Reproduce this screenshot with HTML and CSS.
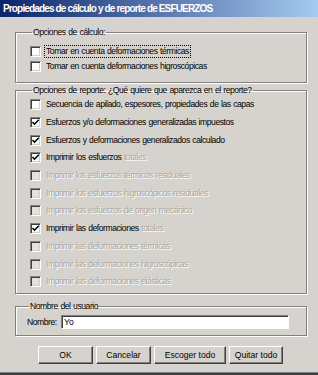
FILE: index.html
```html
<!DOCTYPE html>
<html lang="es">
  <head>
    <meta charset="UTF-8" />
    <title>Propiedades de cálculo y de reporte de ESFUERZOS</title>
    <link rel="stylesheet" href="styles.css">
  </head>
  <body>
    <div class="window">
      <div class="titlebar">Propiedades de cálculo y de reporte de ESFUERZOS</div>

      <fieldset class="group group-calc">
        <legend>Opciones de cálculo:</legend>
        <div class="row"><span class="cb"></span><span class="label focus">Tomar en cuenta deformaciones térmicas</span></div>
        <div class="row"><span class="cb"></span><span class="label">Tomar en cuenta deformaciones higroscópicas</span></div>
      </fieldset>

      <fieldset class="group group-report">
        <legend>Opciones de reporte: ¿Qué quiere que aparezca en el reporte?</legend>
        <div class="row"><span class="cb"></span><span class="label">Secuencia de apilado, espesores, propiedades de las capas</span></div>
        <div class="row"><span class="cb checked"><svg viewBox="0 0 9 9"><path d="M1.5 4 L3.5 6.2 L7.8 1.8"/></svg></span><span class="label">Esfuerzos y/o deformaciones generalizadas impuestos</span></div>
        <div class="row"><span class="cb checked"><svg viewBox="0 0 9 9"><path d="M1.5 4 L3.5 6.2 L7.8 1.8"/></svg></span><span class="label">Esfuerzos y deformaciones generalizados calculado</span></div>
        <div class="row"><span class="cb checked"><svg viewBox="0 0 9 9"><path d="M1.5 4 L3.5 6.2 L7.8 1.8"/></svg></span><span class="label">Imprimir los esfuerzos <span class="dim">totales</span></span></div>
        <div class="row disabled"><span class="cb"></span><span class="label">Imprimir los esfuerzos térmicos residuales</span></div>
        <div class="row disabled"><span class="cb"></span><span class="label">Imprimir los esfuerzos higroscópicos residuales</span></div>
        <div class="row disabled"><span class="cb"></span><span class="label">Imprimir los esfuerzos de origen mecánico</span></div>
        <div class="row"><span class="cb checked"><svg viewBox="0 0 9 9"><path d="M1.5 4 L3.5 6.2 L7.8 1.8"/></svg></span><span class="label">Imprimir las deformaciones <span class="dim">totales</span></span></div>
        <div class="row disabled"><span class="cb"></span><span class="label">Imprimir las deformaciones térmicas</span></div>
        <div class="row disabled"><span class="cb"></span><span class="label">Imprimir las deformaciones higroscópicas</span></div>
        <div class="row disabled"><span class="cb"></span><span class="label">Imprimir las deformaciones elásticas</span></div>
      </fieldset>

      <fieldset class="group group-user">
        <legend>Nombre del usuario</legend>
        <div class="name-row">
          <label for="nombre">Nombre:</label>
          <input id="nombre" type="text" value="Yo">
        </div>
      </fieldset>

      <div class="buttons">
        <button class="btn btn-ok">OK</button>
        <button class="btn btn-cancel">Cancelar</button>
        <button class="btn btn-all">Escoger todo</button>
        <button class="btn btn-none">Quitar todo</button>
      </div>
    </div>
  </body>
</html>
```

FILE: styles.css
```css
* {
  box-sizing: border-box;
  margin: 0;
  padding: 0;
}

body {
  font-family: "Liberation Sans", Arial, sans-serif;
  font-size: 8.6px;
  letter-spacing: -0.45px;
  word-spacing: 0.6px;
  color: #000;
  background-color: #d6d3ce;
}

.window {
  width: 318px;
  height: 375px;
  background-color: #d6d3ce;
  border-bottom: 2px solid #404040;
  box-shadow: inset 0 -1px 0 #808080;
}

.titlebar {
  height: 17px;
  line-height: 17px;
  padding-left: 3px;
  color: #fff;
  font-weight: bold;
  font-size: 10px;
  letter-spacing: -0.85px;
  word-spacing: 0;
  background: linear-gradient(to right, #0a246a, #a6caf0);
}

.group {
  margin: 0 11px 0 15px;
  border: 1px solid #808080;
  box-shadow: 1px 1px 0 #fff, inset 1px 1px 0 #fff;
  padding: 0 0 0 14px;
}

.group legend {
  margin-left: 2px;
  padding: 0 1px;
  line-height: 12px;
}

.group-calc {
  margin-top: 9px;
  height: 57px;
  padding-top: 6px;
}

.group-calc .row {
  height: 15px;
}

.group-report {
  margin-top: 1px;
  height: 210px;
}

.group-report .row {
  height: 17.7px;
}

.group-user {
  margin-top: 6px;
  height: 36px;
  padding-top: 3px;
  padding-left: 11px;
}

.row {
  display: flex;
  align-items: center;
  gap: 3px;
}

.cb {
  width: 11px;
  height: 11px;
  flex: none;
  background-color: #fff;
  border: 1px solid;
  border-color: #808080 #fff #fff #808080;
  box-shadow: inset 1px 1px 0 #404040, inset -1px -1px 0 #d4d0c8;
  display: flex;
  align-items: center;
  justify-content: center;
}

.cb svg {
  width: 9px;
  height: 9px;
}

.cb path {
  fill: none;
  stroke: #000;
  stroke-width: 1.6;
}

.label {
  padding: 0 1px;
  border: 1px solid transparent;
  line-height: 11px;
}

.label.focus {
  border: 1px dotted #000;
}

.dim,
.disabled .label {
  color: #aaa7a2;
  text-shadow: 1px 1px 0 #fff;
}

.disabled .cb {
  background-color: #e4e2de;
}

.name-row {
  display: flex;
  align-items: center;
}

.name-row label {
  width: 34px;
  flex: none;
}

.name-row input {
  width: 228px;
  height: 14px;
  font: inherit;
  padding: 0 2px;
  background-color: #fff;
  border: 1px solid;
  border-color: #808080 #fff #fff #808080;
  box-shadow: inset 1px 1px 0 #404040;
  outline: none;
}

.buttons {
  display: flex;
  gap: 3px;
  margin-top: 10px;
  padding-left: 38px;
}

.btn {
  height: 18px;
  font: inherit;
  color: #000;
  background-color: #d6d3ce;
  border: 1px solid;
  border-color: #fff #404040 #404040 #fff;
  box-shadow: inset -1px -1px 0 #808080;
}

.btn-ok,
.btn-cancel {
  width: 55px;
}

.btn-all {
  width: 72px;
}

.btn-none {
  width: 54px;
}
```
